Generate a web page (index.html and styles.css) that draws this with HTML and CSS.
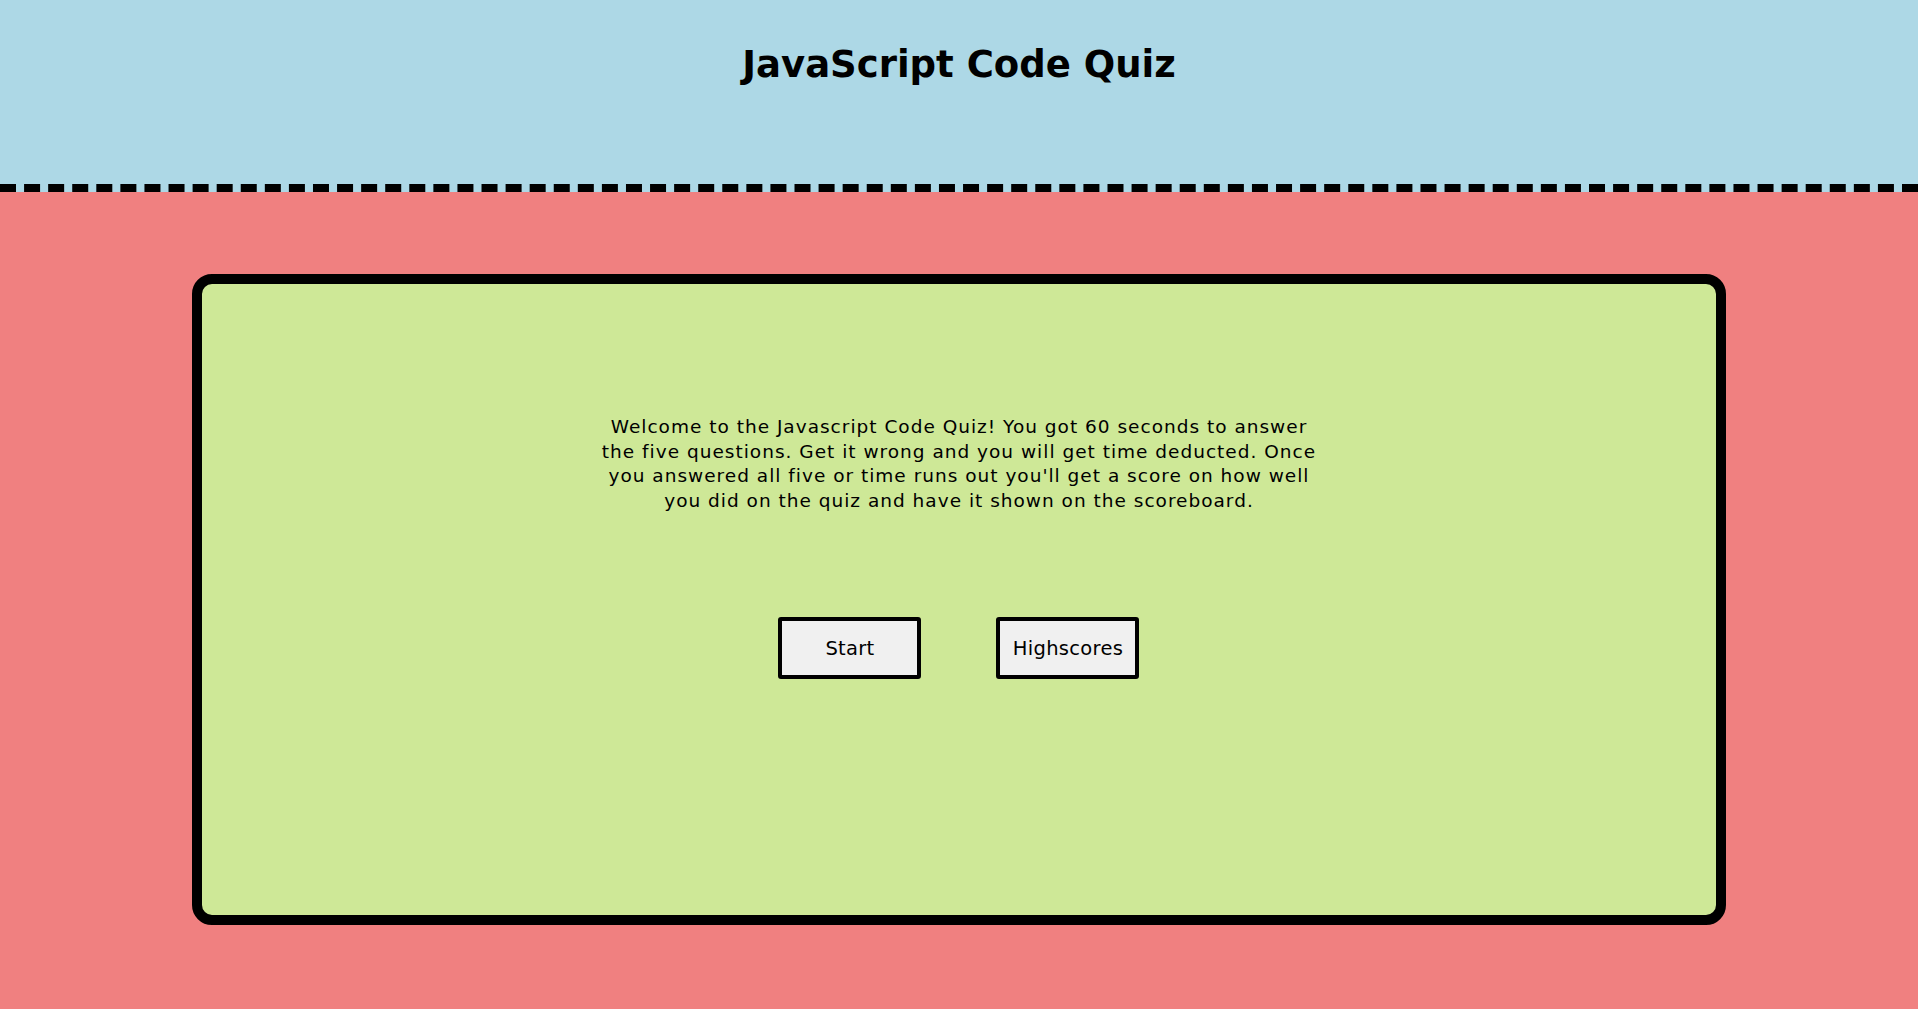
FILE: index.html
```html
<!DOCTYPE html>
<html lang="en">
<head>
<meta charset="utf-8">
<title>JavaScript Code Quiz</title>
<link rel="stylesheet" href="styles.css">
</head>
<body>
<header class="top">
  <h1 class="title">JavaScript Code Quiz</h1>
</header>
<main class="main">
  <section class="card">
    <p class="intro">Welcome to the Javascript Code Quiz! You got 60 seconds to answer the five questions. Get it wrong and you will get time deducted. Once you answered all five or time runs out you'll get a score on how well you did on the quiz and have it shown on the scoreboard.</p>
    <div class="actions">
      <button class="btn" type="button">Start</button>
      <button class="btn" type="button">Highscores</button>
    </div>
  </section>
</main>
</body>
</html>
```
FILE: styles.css
```css
html, body {
  margin: 0;
  padding: 0;
}
body {
  background: #f08080;
  font-family: "DejaVu Sans", Verdana, sans-serif;
  color: #000;
  min-height: 1009px;
}
.top {
  background: #add8e6;
  height: 184px;
  border-bottom: 8px dashed #000;
  box-sizing: content-box;
}
.title {
  margin: 0;
  padding-top: 42px;
  text-align: center;
  font-size: 37px;
  font-weight: bold;
  line-height: 46px;
}
.main {
  padding-top: 82px;
}
.card {
  height: 631px;
  box-sizing: content-box;
  border: 10px solid #000;
  border-radius: 20px;
  background: #cee897;
  display: flex;
  flex-direction: column;
  align-items: center;
  margin-left: auto;
  margin-right: auto;
  width: calc(80% - 20px);
}
.intro {
  margin: 131px 0 0;
  width: 728px;
  text-align: center;
  font-size: 18.5px;
  letter-spacing: 1px;
  line-height: 24.5px;
}
.actions {
  margin-top: 104px;
  display: flex;
  gap: 75px;
}
.btn {
  width: 143px;
  height: 62px;
  border: 4px solid #000;
  border-radius: 3px;
  background: #f0f0f0;
  font-family: "DejaVu Sans", Verdana, sans-serif;
  font-size: 19.5px;
  letter-spacing: 0.3px;
  color: #000;
  padding: 0;
}
```
